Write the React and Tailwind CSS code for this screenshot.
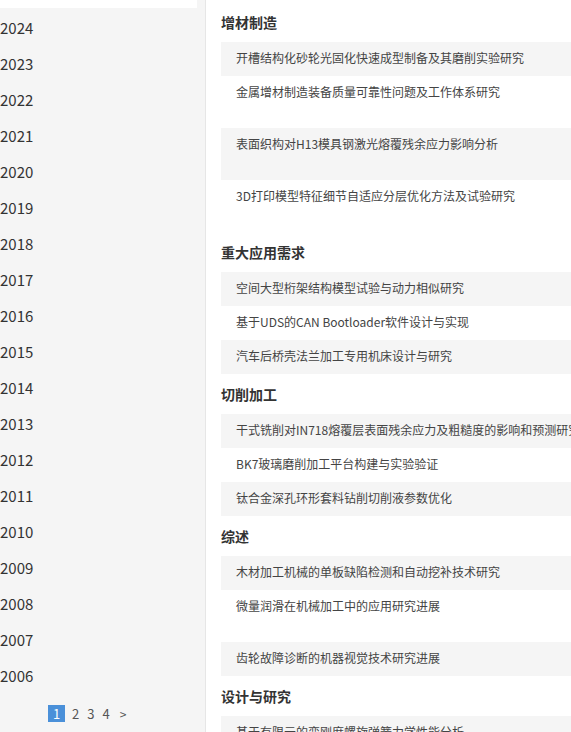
import React from 'react'

const years = [
  2024, 2023, 2022, 2021, 2020, 2019, 2018, 2017, 2016, 2015, 2014, 2013, 2012, 2011, 2010,
  2009, 2008, 2007, 2006,
]

// tall: rows that take two lines of height in the reference
const sections = [
  {
    title: '增材制造',
    items: [
      { t: '开槽结构化砂轮光固化快速成型制备及其磨削实验研究' },
      { t: '金属增材制造装备质量可靠性问题及工作体系研究', tall: true },
      { t: '表面织构对H13模具钢激光熔覆残余应力影响分析', tall: true },
      { t: '3D打印模型特征细节自适应分层优化方法及试验研究', tall: true },
    ],
  },
  {
    title: '重大应用需求',
    items: [
      { t: '空间大型桁架结构模型试验与动力相似研究' },
      { t: '基于UDS的CAN Bootloader软件设计与实现' },
      { t: '汽车后桥壳法兰加工专用机床设计与研究' },
    ],
  },
  {
    title: '切削加工',
    items: [
      { t: '干式铣削对IN718熔覆层表面残余应力及粗糙度的影响和预测研究' },
      { t: 'BK7玻璃磨削加工平台构建与实验验证' },
      { t: '钛合金深孔环形套料钻削切削液参数优化' },
    ],
  },
  {
    title: '综述',
    items: [
      { t: '木材加工机械的单板缺陷检测和自动挖补技术研究' },
      { t: '微量润滑在机械加工中的应用研究进展', tall: true },
      { t: '齿轮故障诊断的机器视觉技术研究进展' },
    ],
  },
  {
    title: '设计与研究',
    items: [{ t: '基于有限元的变刚度螺旋弹簧力学性能分析' }],
  },
]

export default function App() {
  return (
    <div
      className="flex h-[732px] w-[571px] overflow-hidden bg-white text-[#333]"
      style={{ fontFamily: '"Noto Sans CJK SC", "Noto Sans", sans-serif' }}
    >
      {/* Sidebar */}
      <div className="flex w-[206px] flex-none flex-col border-r border-[#e6e6e6] bg-[#f5f5f5]">
        <div className="-mt-[28px] h-[36px] w-[197px] overflow-hidden bg-white pt-[13px] text-[15px] leading-[18px] text-[#e4393c]">
          2025
        </div>
        {years.map((y) => (
          <div key={y} className="h-[36px] pt-[2px] text-[15px] leading-[36px] text-[#333]">
            {y}
          </div>
        ))}
        <div className="flex items-center pl-[48px] pt-[12px] text-[13px] text-[#555]">
          <span className="flex h-[17px] w-[17px] items-center justify-center bg-[#4a90d9] text-white">1</span>
          <span className="ml-[7px]">2</span>
          <span className="ml-[8px]">3</span>
          <span className="ml-[8px]">4</span>
          <span className="ml-[10px] text-[12px]">&gt;</span>
        </div>
      </div>

      {/* Content */}
      <div className="flex-1 pl-[15px] pt-[2px]">
        {sections.map((s) => (
          <div key={s.title}>
            <h2 className="h-[40px] text-[14px] font-bold leading-[40px] text-[#333]">{s.title}</h2>
            {s.items.map((it, i) => (
              <div
                key={it.t}
                className={`w-[500px] whitespace-nowrap pl-[15px] pt-[7px] text-[12px] leading-[18px] text-[#444] ${
                  it.tall ? 'h-[52px]' : 'h-[34px]'
                } ${i % 2 === 0 ? 'bg-[#f5f5f5]' : 'bg-white'}`}
              >
                {it.t}
              </div>
            ))}
          </div>
        ))}
      </div>
    </div>
  )
}
